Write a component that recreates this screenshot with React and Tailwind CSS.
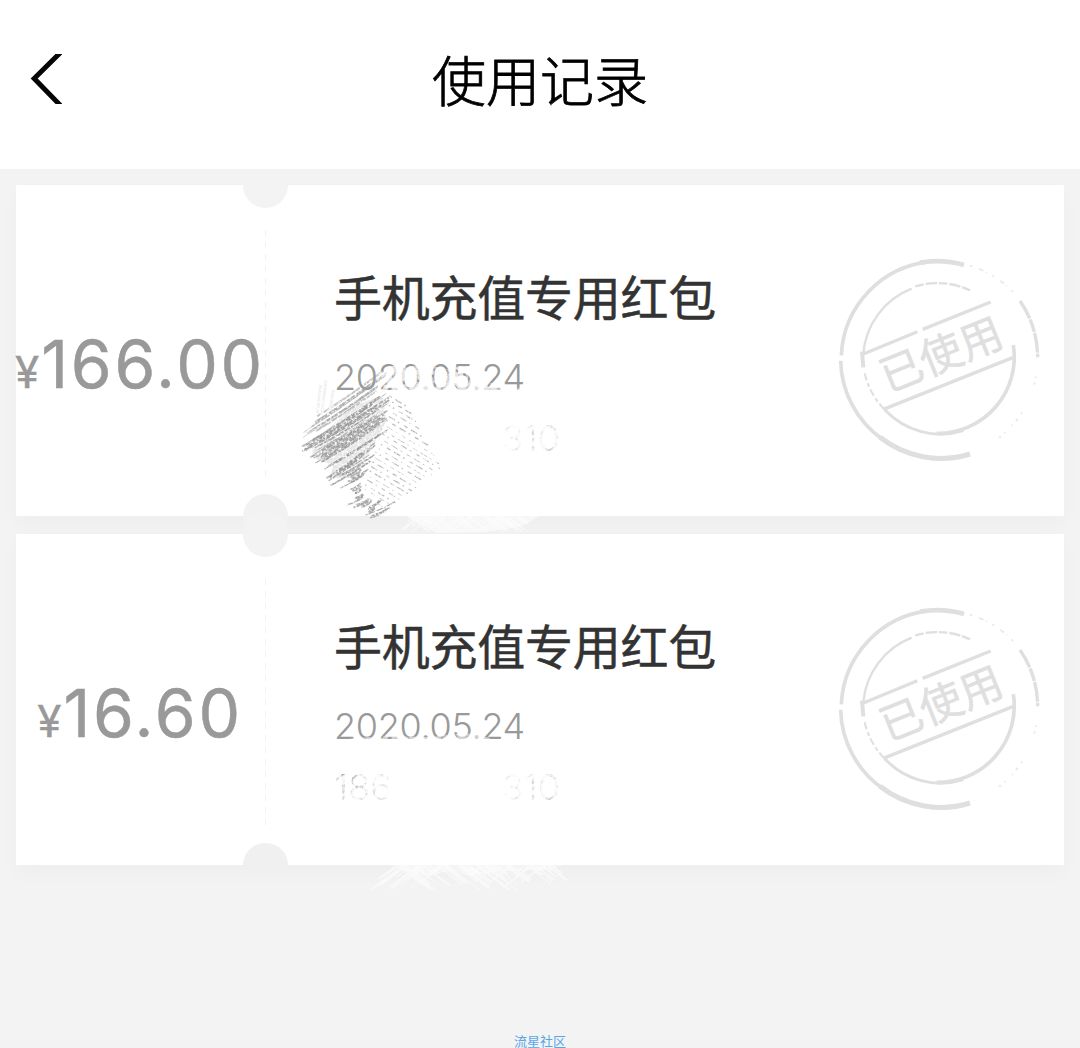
/**
 * App.jsx
 * Coupon usage history: header bar and a list of used red-packet tickets.
 */

const COUPONS = [
  { id: 1, amount: '166.00', title: '手机充值专用红包', date: '2020.05.24', phoneStart: '', phoneEnd: '310' },
  { id: 2, amount: '16.60', title: '手机充值专用红包', date: '2020.05.24', phoneStart: '186', phoneEnd: '310' },
];

// Small seeded generator so the strokes are the same on every render
function createRandom(seed) {
  let s = seed;
  return () => {
    s = (s * 16807) % 2147483647;
    return s / 2147483647;
  };
}

// Hatches running up to the right: left end, right end, number of strokes
const HATCH_ROWS = [
  [55, 248, 325, 62, 6], [62, 268, 300, 110, 6], [66, 290, 322, 125, 8], [64, 310, 330, 148, 8],
  [88, 325, 325, 180, 8], [85, 352, 322, 200, 8], [120, 362, 330, 232, 8], [138, 392, 305, 270, 8],
  [142, 402, 290, 312, 8], [175, 410, 280, 345, 7], [205, 432, 262, 398, 6], [200, 466, 275, 430, 6],
  [220, 482, 290, 440, 4], [246, 494, 305, 456, 6], [262, 500, 350, 460, 4],
];

function buildDarkStrokes() {
  const rand = createRandom(7123);
  const out = [];
  HATCH_ROWS.forEach(([x1, y1, x2, y2, count], i) => {
    const slope = (y2 - y1) / (x2 - x1);
    for (let n = 0; n < count; n += 1) {
      const dy = (rand() - 0.5) * 22;
      const span = x2 - x1;
      const sx = x1 + Math.min(rand() * 60, span * 0.35);
      const ex = x2 - Math.min(rand() * 80, span * 0.35);
      const sy = y1 + (sx - x1) * slope + dy;
      const ey = y1 + (ex - x1) * slope + dy;
      out.push({
        d: `M${sx} ${sy} Q${(sx + ex) / 2} ${(sy + ey) / 2 + 6} ${ex} ${ey}`,
        w: 2.5 + rand() * 3.5,
        o: i < 2 ? 0.6 : 0.85,
      });
    }
  });
  return out;
}

// Lighter hatches going down to the right
function buildLightStrokes() {
  const rand = createRandom(1931);
  return Array.from({ length: 22 }, (_, i) => {
    const x = 328 - i * 4 + rand() * 8;
    const y = 138 + i * 14;
    const right = i < 8 ? 380 + i * 14 : 480 - (i - 8) * 12;
    const len = Math.max(30, right - x);
    return { d: `M${x} ${y} l${len} ${len * 0.6}`, w: 2 + rand() * 2.5, offset: rand() * 60 };
  });
}

// Short white scratches over the lower edge of a ticket
function buildScratches(seed, count, x0, width, y0, reach) {
  const rand = createRandom(seed);
  return Array.from({ length: count }, () => {
    const x = x0 + rand() * width;
    const y = y0 + rand() * 4;
    const dir = rand() > 0.3 ? 1 : -1;
    const len = reach * (0.35 + rand() * 0.65);
    return { d: `M${x} ${y} l${dir * len} ${len * 0.75}`, w: 0.6 + rand() * 1.3 };
  });
}

const DARK = buildDarkStrokes();
const LIGHT = buildLightStrokes();
const SCRATCHES_TOP = buildScratches(3771, 70, 126, 115, 148, 22);
const SCRATCHES_BOTTOM = [
  ...buildScratches(5387, 60, 112, 96, 148, 34),
  ...buildScratches(9241, 40, 205, 66, 148, 26),
];

function BackIcon() {
  return (
    <svg className="h-[50px] w-8" viewBox="0 0 32 50" fill="none">
      <path d="M31 -2 L4.2 24.5 L31 52" stroke="#050505" strokeWidth="5" />
    </svg>
  );
}

function UsedStamp() {
  return (
    <svg className="h-60 w-60" viewBox="0 0 720 720" fill="none" stroke="#dfdfdf">
      <path d="M64 346 A296 296 0 0 1 330 65" strokeWidth="11" />
      <path d="M300 68 A296 296 0 0 1 432 75" strokeWidth="14" />
      <path d="M62 362 A296 296 0 0 0 190 600" strokeWidth="11" />
      <path d="M180 592 A296 296 0 0 0 450 642" strokeWidth="15" />
      <path d="M330 657 L385 657" strokeWidth="8" strokeDasharray="9 5" />
      <path d="M600 183 A296 296 0 0 1 653 352" strokeWidth="10" strokeDasharray="60 3 40 3" />
      <path d="M450 77 A296 296 0 0 1 590 168" strokeWidth="5" strokeDasharray="7 22 14 9 3 18" opacity="0.7" />
      <path
        d="M648 410 A296 296 0 0 1 462 635"
        strokeWidth="6"
        strokeDasharray="4 14 6 92 5 18 8 16 3 28"
        opacity="0.7"
      />
      <path d="M130 340 A229 229 0 0 1 275 146" strokeWidth="7" />
      <path d="M286 139 A229 229 0 0 1 452 152" strokeWidth="7" strokeDasharray="26 6 34 5" />
      <path d="M126 335 L130 382" strokeWidth="12" />
      <path d="M134 400 A229 229 0 0 0 200 515" strokeDasharray="22 9 12 8" strokeWidth="6" />
      <path d="M195 510 A229 229 0 0 0 430 572" strokeWidth="9" />
      <path d="M350 580 A229 229 0 0 0 580 315" strokeWidth="11" />
      <path d="M130 342 L292 275 M308 268 L512 186 M190 508 L580 352" strokeWidth="10" />
      <text
        transform="translate(363 343) rotate(-22)"
        x="0"
        y="47"
        textAnchor="middle"
        fill="#dfdfdf"
        strokeWidth="1.5"
        fontSize="128"
        className="font-['Noto_Sans_CJK_SC',sans-serif]"
      >
        已使用
      </text>
    </svg>
  );
}

function Smudge({ first }) {
  const scratches = first ? SCRATCHES_TOP : SCRATCHES_BOTTOM;
  const suffix = first ? 'a' : 'b';
  return (
    <svg
      className="pointer-events-none absolute top-[181px] left-[264px] z-20 h-[210px] w-[320px]"
      viewBox="0 0 320 210"
      fill="none"
    >
      <defs>
        <filter id={`grain-${suffix}`} x="-10%" y="-10%" width="120%" height="120%">
          <feTurbulence type="fractalNoise" baseFrequency="0.4" numOctaves="3" seed="8" result="noise" />
          <feColorMatrix in="noise" values="0 0 0 0 0  0 0 0 0 0  0 0 0 0 0  0 0 0 -2.6 2.1" result="holes" />
          <feComposite in="SourceGraphic" in2="holes" operator="in" />
        </filter>
        <filter id={`rub-${suffix}`} x="-10%" y="-10%" width="120%" height="120%">
          <feTurbulence type="fractalNoise" baseFrequency="0.23" numOctaves="3" seed="21" result="noise" />
          <feColorMatrix in="noise" values="0 0 0 0 0  0 0 0 0 0  0 0 0 0 0  0 0 0 -4 2.9" result="holes" />
          <feComposite in="SourceGraphic" in2="holes" operator="in" />
        </filter>
      </defs>
      {/* Rubbed-out text */}
      <g fill="#fff" filter={`url(#rub-${suffix})`}>
        {first ? (
          <path d="M98 14 L115 -8 L150 0 L170 4 L194 -6 L206 16 L240 22 L240 32 L98 32 Z" opacity="0.75" />
        ) : (
          <path d="M70 23 L110 21 L150 22 L186 18 L210 23 L210 32 L70 32 Z" opacity="0.55" />
        )}
        <path d="M50 52 L290 52 L290 92 L50 92 Z" opacity="0.9" />
      </g>
      {first ? (
        <>
          <g filter="url(#grain-a)">
            <g transform="translate(0 -16) scale(0.33333)">
              <path
                d="M95 275 L230 165 L310 135 L318 215 L255 330 L215 385 L150 385 L160 345 L100 325 Z"
                fill="#b8b8b8"
                opacity="0.35"
              />
              <g stroke="#9c9c9c">
                {DARK.map((s, i) => (
                  <path key={i} d={s.d} strokeWidth={s.w} opacity={s.o} />
                ))}
              </g>
              <g stroke="#b8b8b8" strokeDasharray="13 12 22 10 5 16">
                {LIGHT.map((s, i) => (
                  <path key={i} d={s.d} strokeWidth={s.w} strokeDashoffset={s.offset} />
                ))}
              </g>
              <path d="M112 190 L122 105 M125 195 L138 90 M150 180 L160 120" stroke="#f0f0f0" strokeWidth="9" />
            </g>
          </g>
          <path d="M126 149 L262 149 L240 161 L204 166 L156 167 Z" fill="#fff" opacity="0.5" />
        </>
      ) : (
        <path d="M105 149 L284 149 L270 155 L220 156 L190 161 L170 156 L145 161 Z" fill="#fff" opacity="0.35" />
      )}
      <g stroke="#fff" opacity={first ? 0.5 : 0.6}>
        {scratches.map((s, i) => (
          <path key={i} d={s.d} strokeWidth={s.w} />
        ))}
      </g>
    </svg>
  );
}

function FadedDigits({ children, tone }) {
  return (
    <span
      className={`bg-clip-text text-transparent ${
        tone === 'left'
          ? 'bg-linear-to-r from-[#a4a4a4] to-[#eeeeee]'
          : 'bg-linear-to-r from-[#f4f4f4] to-[#bcbcbc]'
      }`}
    >
      {children}
    </span>
  );
}

function CouponCard({ coupon, first }) {
  return (
    <article className="relative flex h-[331px] bg-white shadow-[0_8px_20px_rgba(0,0,0,0.025)]">
      {first ? (
        <>
          <span className="absolute top-0 left-[227px] z-10 h-[23px] w-[45px] rounded-b-full bg-[#f3f3f3]" />
          <span className="absolute -bottom-[23px] left-[227px] z-10 size-[45px] rounded-full bg-[#f2f2f2]" />
        </>
      ) : (
        <>
          <span className="absolute -top-[22px] left-[227px] z-10 size-[45px] rounded-full bg-[#f3f3f3]" />
          <span className="absolute bottom-0 left-[227px] z-10 h-[22px] w-[45px] rounded-t-full bg-[#f0f0f0]" />
        </>
      )}

      {/* Amount */}
      <div className="relative flex w-[250px] shrink-0 items-center justify-center pt-[26px] text-[#999]">
        <div className="flex items-baseline whitespace-nowrap font-['Inter',sans-serif] leading-none [font-optical-sizing:none]">
          <span className="-ml-0.5 text-[44px] [-webkit-text-stroke:0.4px_#999]">¥</span>
          <span className="ml-0.5 text-[66px] tracking-[2.8px] [-webkit-text-stroke:0.5px_#999]">{coupon.amount}</span>
        </div>
        <span className="absolute top-[45px] right-0 h-[246px] w-px bg-[repeating-linear-gradient(to_bottom,#f2f2f2_0_6px,transparent_6px_12px)]" />
      </div>

      {/* Details */}
      <div className="flex-1 pt-[82px] pl-[68px]">
        <h2 className="font-['Noto_Sans_CJK_SC',sans-serif] text-[48px] leading-14 font-normal tracking-[-0.25px] text-[#333] [-webkit-text-stroke:0.5px_#333]">
          {coupon.title}
        </h2>
        <p className="mt-[31px] font-['Inter',sans-serif] text-[36px] leading-[46px] font-light tracking-[-0.3px] text-[#999]">
          {coupon.date}
        </p>
        <p className="mt-[15px] flex w-[226px] justify-between font-['Inter',sans-serif] text-[36px] leading-[46px] font-light">
          <FadedDigits tone="left">{coupon.phoneStart}</FadedDigits>
          <FadedDigits tone="right">{coupon.phoneEnd}</FadedDigits>
        </p>
      </div>

      <div className="mt-[55px] mr-1">
        <UsedStamp />
      </div>
      <Smudge first={first} />
    </article>
  );
}

export default function App() {
  return (
    <div className="flex h-[1048px] w-[1080px] flex-col overflow-hidden bg-[#f3f3f3]">
      <header className="grid h-[169px] shrink-0 grid-cols-[1fr_auto_1fr] items-center bg-white pb-3">
        <button type="button" className="ml-[30px] w-8" aria-label="返回">
          <BackIcon />
        </button>
        <h1 className="font-['Noto_Sans_CJK_SC',sans-serif] text-[54px] leading-none font-light text-black [-webkit-text-stroke:0.8px_#000]">
          使用记录
        </h1>
      </header>

      <main className="flex flex-1 flex-col gap-[18px] px-4 pt-4">
        {COUPONS.map((coupon, i) => (
          <CouponCard key={coupon.id} coupon={coupon} first={i === 0} />
        ))}
      </main>

      <footer className="flex h-[15px] justify-center font-['Noto_Sans_CJK_SC',sans-serif] text-[13px] leading-[15px] text-[#5aa5e6]">
        流星社区
      </footer>
    </div>
  );
}
